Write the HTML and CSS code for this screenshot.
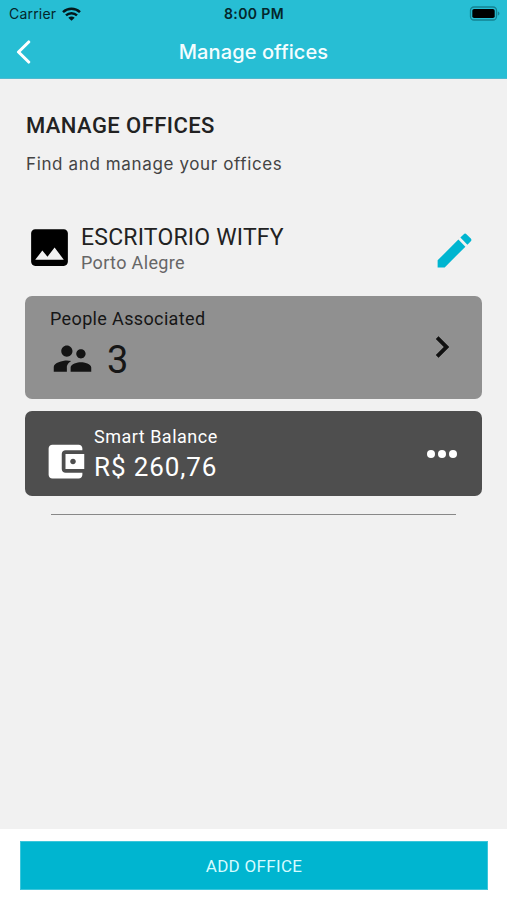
FILE: index.html
```
<!DOCTYPE html>
<html lang="en">
	<head>
		<meta charset="utf-8" />
		<title>Manage offices</title>
		<link rel="stylesheet" href="styles.css">
	</head>
	<body>
		<header>
			<div class="status">
				<div class="carrier">
					<span>Carrier</span>
					<svg width="19" height="14" viewBox="0 0 19 14">
						<path d="M1 5.2C5.8.7 13.200.7 18 5.200M4 8.300c3.100-2.900 7.900-2.900 11 0" fill="none" stroke="#04181b" stroke-width="2.500"/>
						<path d="M9.500 13.800L6.300 10.700c1.800-1.600 4.600-1.600 6.400 0z" fill="#04181b"/>
					</svg>
				</div>
				<div class="time">8:00 PM</div>
				<svg class="battery" width="32" height="15" viewBox="0 0 32 15">
					<rect x="1.500" y="1" width="26" height="13" rx="3.500" fill="none" stroke="#158291" stroke-width="1.300"/>
					<rect x="3.300" y="2.900" width="22.400" height="9.200" rx="1.800" fill="#000"/>
					<path d="M28.800 5.500c2.200.7 2.200 3.300 0 4z" fill="#158291"/>
				</svg>
			</div>
			<div class="nav">
				<svg class="back" width="16" height="24" viewBox="0 0 16 24">
					<path d="M13.700 2L3.500 12l10.200 10" fill="none" stroke="#fff" stroke-width="3.100" stroke-linecap="round" stroke-linejoin="round"/>
				</svg>
				<div class="nav-title">Manage offices</div>
			</div>
		</header>
		<main>
			<h1>MANAGE OFFICES</h1>
			<p class="subtitle">Find and manage your offices</p>
			<div class="office">
				<svg width="49" height="49" viewBox="0 0 24 24">
					<path d="M21 19V5c0-1.100-.9-2-2-2H5c-1.100 0-2 .9-2 2v14c0 1.100.9 2 2 2h14c1.100 0 2-.9 2-2zM8.500 13.500l2.500 3.010L14.500 12l4.500 6H5l3.500-4.500z"/>
				</svg>
				<div class="office-text">
					<div class="office-name">ESCRITORIO WITFY</div>
					<div class="office-city">Porto Alegre</div>
				</div>
				<svg class="edit" width="45" height="45" viewBox="0 0 24 24">
					<path fill="#00b5d0" d="M3 17.250V21h3.750L17.810 9.940l-3.750-3.750L3 17.250zM20.710 7.040c.39-.39.39-1.020 0-1.410l-2.340-2.340c-.39-.39-1.020-.39-1.410 0l-1.830 1.830 3.750 3.750 1.830-1.830z"/>
				</svg>
			</div>
			<div class="card people">
				<div class="people-info">
					<div class="label">People Associated</div>
					<div class="count">
						<svg width="45" height="45" viewBox="0 0 24 24">
							<path fill="#141414" d="M16.500 12c1.380 0 2.490-1.120 2.490-2.500S17.880 7 16.500 7C15.120 7 14 8.120 14 9.500s1.120 2.500 2.500 2.500zM9 11c1.660 0 2.990-1.340 2.990-3S10.660 5 9 5C7.340 5 6 6.340 6 8s1.340 3 3 3zm7.500 3c-1.830 0-5.500.92-5.500 2.750V19h11v-2.250c0-1.830-3.670-2.750-5.500-2.750zM9 13c-2.330 0-7 1.170-7 3.500V19h7v-2.250c0-.85.33-2.340 2.370-3.470C10.500 13.100 9.660 13 9 13z"/>
						</svg>
						<span>3</span>
					</div>
				</div>
				<svg width="42" height="42" viewBox="0 0 24 24">
					<path fill="#111" stroke="#111" stroke-width=".3" d="M10 6L8.590 7.410 13.170 12l-4.580 4.590L10 18l6-6z"/>
				</svg>
			</div>
			<div class="card balance">
				<svg class="wallet" width="45" height="45" viewBox="0 0 24 24">
					<path fill="#fff" d="M21 18v1c0 1.100-.9 2-2 2H5c-1.110 0-2-.9-2-2V5c0-1.100.89-2 2-2h14c1.100 0 2 .9 2 2v1h-9c-1.110 0-2 .9-2 2v8c0 1.100.89 2 2 2h9zm-9-2h10V8H12v8zm4-2.500c-.83 0-1.500-.67-1.500-1.500s.67-1.500 1.500-1.500 1.500.67 1.500 1.500-.67 1.500-1.500 1.500z"/>
				</svg>
				<div class="balance-info">
					<div class="label">Smart Balance</div>
					<div class="amount">R$ 260,76</div>
				</div>
				<div class="dots"><i></i><i></i><i></i></div>
			</div>
			<hr>
		</main>
		<footer>
			<button>ADD OFFICE</button>
		</footer>
	</body>
</html>
```
FILE: styles.css
```
body {
	margin: 0;
	height: 900px;
	display: flex;
	flex-direction: column;
	background: #f1f1f1;
	color: #222;
	font-family: Roboto, sans-serif;
	white-space: nowrap;
}
svg {
	display: block;
	flex: none;
}

header {
	height: 79px;
	box-sizing: border-box;
	background: #27bed4;
	border-bottom: 1px solid #4fb9cf;
	font-family: Inter, sans-serif;
}
.status {
	display: grid;
	grid-template-columns: 1fr auto 1fr;
	align-items: center;
	height: 27px;
	padding: 0 6px 0 9px;
	color: #04262b;
}
.carrier {
	display: flex;
	align-items: center;
	gap: 6px;
	font-size: 14px;
	letter-spacing: 0.2px;
}
.time {
	margin-left: -2px;
	font-size: 14px;
	font-weight: 600;
	letter-spacing: 0.4px;
}
.battery {
	justify-self: end;
}
.nav {
	display: grid;
	grid-template-columns: 1fr auto 1fr;
	align-items: center;
	height: 50px;
	padding: 0 15px;
}
.nav-title {
	color: #f4fdff;
	font-size: 20px;
	font-weight: 500;
	letter-spacing: 0.1px;
}

main {
	flex: 1;
	padding: 0 25px;
}
h1 {
	margin: 34px 0 0 1px;
	font-size: 22px;
	line-height: 26px;
	font-weight: 500;
	letter-spacing: 0.42px;
}
.subtitle {
	margin: 14px 0 0 1px;
	color: #444;
	font-family: Inter, sans-serif;
	font-size: 17px;
	line-height: 22px;
	letter-spacing: 0.63px;
}
.office {
	display: flex;
	align-items: center;
	height: 50px;
	margin-top: 47px;
}
.office-text {
	flex: 1;
	margin: 5px 0 0 7px;
}
.office-name {
	font-size: 23px;
	line-height: 26px;
	letter-spacing: 0.2px;
}
.office-city {
	color: #666;
	font-size: 18px;
	line-height: 23px;
	letter-spacing: 0.35px;
}
.edit {
	margin: 7px 5px 0 0;
}

.card {
	display: flex;
	box-sizing: border-box;
	border-radius: 7px;
}
.label {
	font-size: 18px;
	line-height: 22px;
	letter-spacing: 0.36px;
}
.people {
	height: 103px;
	margin-top: 24px;
	padding: 12px 19px 0 25px;
	justify-content: space-between;
	background: #909090;
	color: #161616;
}
.people > svg {
	margin-top: 18px;
}
.count {
	display: flex;
	align-items: flex-start;
	gap: 12px;
	margin-top: 6px;
	font-size: 38px;
	line-height: 45px;
}
.count span {
	padding-top: 2px;
}
.balance {
	height: 85px;
	margin-top: 12px;
	padding: 15px 25px 0 18px;
	background: #4e4e4e;
	color: #fff;
}
.balance .label {
	letter-spacing: 0.5px;
}
.wallet {
	margin-top: 13px;
}
.balance-info {
	flex: 1;
	margin-left: 6px;
}
.amount {
	margin-top: 4px;
	font-size: 26px;
	line-height: 30px;
	letter-spacing: 0.9px;
}
.dots {
	display: flex;
	gap: 3px;
	margin-top: 24px;
}
.dots i {
	width: 8px;
	height: 8px;
	border-radius: 50%;
	background: #fff;
}
hr {
	height: 1px;
	margin: 18px 26px 0;
	border: 0;
	background: #888;
}

footer {
	height: 71px;
	box-sizing: border-box;
	padding: 12px 19px 0 20px;
	background: #fff;
}
button {
	display: block;
	width: 100%;
	height: 49px;
	border: 1px solid #3cc6db;
	background: #00b5d0;
	color: #d5fbff;
	font: 17px Roboto, sans-serif;
	letter-spacing: 0.3px;
}
```
